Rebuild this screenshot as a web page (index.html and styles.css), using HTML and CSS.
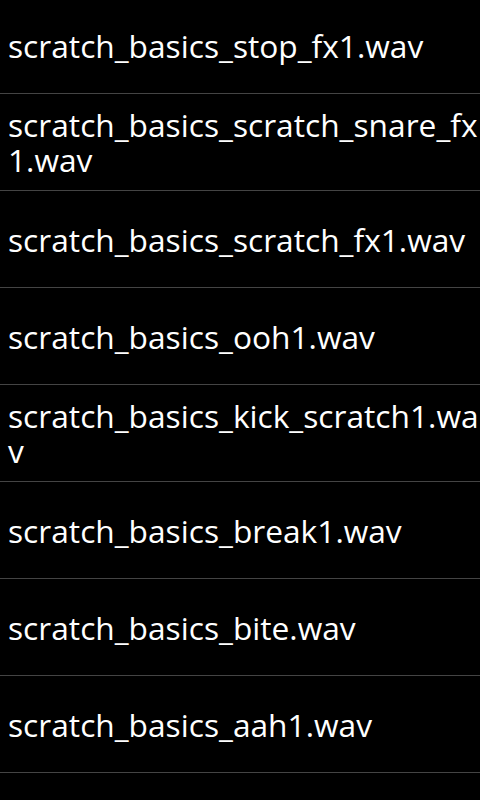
FILE: index.html
```html
<!DOCTYPE html>
<html lang="en">
<head>
    <meta charset="UTF-8">
    <meta name="viewport" content="width=device-width, initial-scale=1.0">
    <title>Samples</title>
    <link rel="stylesheet" href="styles.css">
</head>
<body>
    <ul class="file-list">
        <li class="file-item">scratch_basics_stop_fx1.wav</li>
        <li class="file-item">scratch_basics_scratch_snare_fx1.wav</li>
        <li class="file-item">scratch_basics_scratch_fx1.wav</li>
        <li class="file-item">scratch_basics_ooh1.wav</li>
        <li class="file-item">scratch_basics_kick_scratch1.wav</li>
        <li class="file-item">scratch_basics_break1.wav</li>
        <li class="file-item">scratch_basics_bite.wav</li>
        <li class="file-item">scratch_basics_aah1.wav</li>
    </ul>
</body>
</html>
```

FILE: styles.css
```css
body {
    margin: 0;
    padding: 0;
    background-color: #000;
    color: #fff;
    font-family: "Open Sans", "DejaVu Sans", sans-serif;
    overflow: hidden;
}

/* list is scrolled a few pixels */
.file-list {
    list-style: none;
    margin: -3px 0 0 0;
    padding: 0;
}

.file-item {
    min-height: 97px;
    box-sizing: border-box;
    display: flex;
    align-items: center;
    padding: 0 0 0 8px;
    font-size: 31.7px;
    line-height: 35px;
    word-break: break-all;
    border-bottom: 1px solid #444;
}
```
